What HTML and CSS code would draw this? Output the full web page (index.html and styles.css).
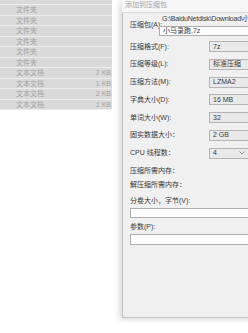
FILE: index.html
```html
<!DOCTYPE html>
<html lang="zh-CN">
<head>
    <meta charset="UTF-8">
    <meta name="viewport" content="width=device-width, initial-scale=1.0">
    <title>添加到压缩包</title>
    <link rel="stylesheet" href="styles.css">
</head>
<body>
    <div class="screen">
        <!-- file list behind the dialog -->
        <div class="files">
            <div class="file-row file-row-cut"></div>
            <div class="file-row"><span class="file-name">文件夹</span><span class="file-size"></span></div>
            <div class="file-row"><span class="file-name">文件夹</span><span class="file-size"></span></div>
            <div class="file-row"><span class="file-name">文件夹</span><span class="file-size"></span></div>
            <div class="file-row"><span class="file-name">文件夹</span><span class="file-size"></span></div>
            <div class="file-row"><span class="file-name">文件夹</span><span class="file-size"></span></div>
            <div class="file-row"><span class="file-name">文件夹</span><span class="file-size"></span></div>
            <div class="file-row"><span class="file-name">文本文档</span><span class="file-size">2 KB</span></div>
            <div class="file-row"><span class="file-name">文本文档</span><span class="file-size">1 KB</span></div>
            <div class="file-row"><span class="file-name">文本文档</span><span class="file-size">2 KB</span></div>
            <div class="file-row"><span class="file-name">文本文档</span><span class="file-size">1 KB</span></div>
        </div>

        <div class="dialog">
            <div class="dialog-title">添加到压缩包</div>
            <div class="dialog-body">
                <div class="archive-row">
                    <span class="label archive-label">压缩包(A):</span>
                    <div class="archive-field">
                        <div class="archive-path">G:\BaiduNetdisk\Download\小马录跑\</div>
                        <div class="text-box archive-box">小马录跑.7z</div>
                    </div>
                </div>

                <div class="options">
                    <div class="option"><span class="label option-label">压缩格式(F):</span><div class="combo">7z</div></div>
                    <div class="option"><span class="label option-label">压缩等级(L):</span><div class="combo">标准压缩</div></div>
                    <div class="option"><span class="label option-label">压缩方法(M):</span><div class="combo">LZMA2</div></div>
                    <div class="option"><span class="label option-label">字典大小(D):</span><div class="combo">16 MB</div></div>
                    <div class="option"><span class="label option-label">单词大小(W):</span><div class="combo">32</div></div>
                    <div class="option"><span class="label option-label">固实数据大小：</span><div class="combo">2 GB</div></div>
                    <div class="option">
                        <span class="label option-label">CPU 线程数：</span>
                        <div class="combo">
                            <span>4</span>
                            <svg class="chevron" width="6" height="4" viewBox="0 0 6 4"><polyline points="0.5,0.5 3,3 5.5,0.5" fill="none" stroke="#8a8a8a" stroke-width="0.9"/></svg>
                        </div>
                    </div>
                </div>

                <div class="label info mem-pack">压缩所需内存：</div>
                <div class="label info mem-unpack">解压缩所需内存：</div>
                <div class="label info split-label">分卷大小，字节(V):</div>
                <div class="text-box split-box"></div>
                <div class="label info param-label">参数(P):</div>
                <div class="text-box param-box"></div>
            </div>
        </div>
    </div>
</body>
</html>
```

FILE: styles.css
```css
html, body {
    margin: 0;
    padding: 0;
    background: #ffffff;
    overflow: hidden;
}
body {
    font-family: "Liberation Sans", "Noto Sans CJK SC", sans-serif;
    font-size: 7px;
    color: #3a3a3a;
}
.screen {
    display: flex;
    align-items: flex-start;
    width: 248px;
    height: 333px;
    overflow: hidden;
}

/* file list */
.files {
    width: 112px;
    flex-shrink: 0;
    background: #dadada;
}
.file-row {
    display: flex;
    justify-content: space-between;
    align-items: center;
    height: 9.5px;
    border-bottom: 1px solid #ececec;
    padding: 0 1px 0 16px;
    color: #a2a2a2;
    line-height: 9px;
}
.file-row-cut {
    height: 4px;
}

/* dialog */
.dialog {
    width: 190px;
    height: 318px;
    margin-left: 10px;
    flex-shrink: 0;
    display: flex;
    flex-direction: column;
    background: #f6f6f6;
    box-shadow: -3px 2px 5px rgba(0, 0, 0, 0.13);
}
.dialog-title {
    height: 12px;
    line-height: 8px;
    padding: 1px 0 0 3px;
    box-sizing: border-box;
    color: #a4a4a4;
}
.dialog-body {
    flex: 1;
    background: #f0f0f0;
    border-top: 1px solid #dadada;
    border-left: 1px solid #c4c4c4;
    border-bottom: 1px solid #c4c4c4;
    padding: 2px 0 0 7px;
}
.label {
    line-height: 8px;
    white-space: nowrap;
}

.archive-row {
    display: flex;
}
.archive-label {
    width: 29px;
    margin-top: 6px;
}
.archive-field {
    flex: 1;
}
.archive-path {
    line-height: 8px;
    padding-left: 3px;
    white-space: nowrap;
    letter-spacing: -0.2px;
}
.text-box {
    background: #ffffff;
    border: 1px solid #adadad;
    box-sizing: border-box;
    line-height: 8px;
    padding-left: 3px;
}
.archive-box {
    height: 10px;
    margin-top: 3px;
}

.options {
    display: flex;
    flex-direction: column;
    gap: 6.8px;
    margin-top: 5px;
}
.option {
    display: flex;
    align-items: center;
    height: 11px;
}
.option-label {
    width: 79px;
}
.combo {
    width: 42px;
    height: 11px;
    box-sizing: border-box;
    display: flex;
    align-items: center;
    justify-content: space-between;
    padding: 0 5px 0 3px;
    background: #e9e9e9;
    border: 1px solid #b4b4b4;
    line-height: 8px;
}
.chevron {
    display: block;
}

.mem-pack {
    margin-top: 8px;
}
.mem-unpack {
    margin-top: 6px;
}
.split-label {
    margin-top: 8px;
}
.split-box {
    height: 10px;
    margin-top: 3px;
}
.param-label {
    margin-top: 5px;
}
.param-box {
    height: 11px;
    margin-top: 3px;
}
```
